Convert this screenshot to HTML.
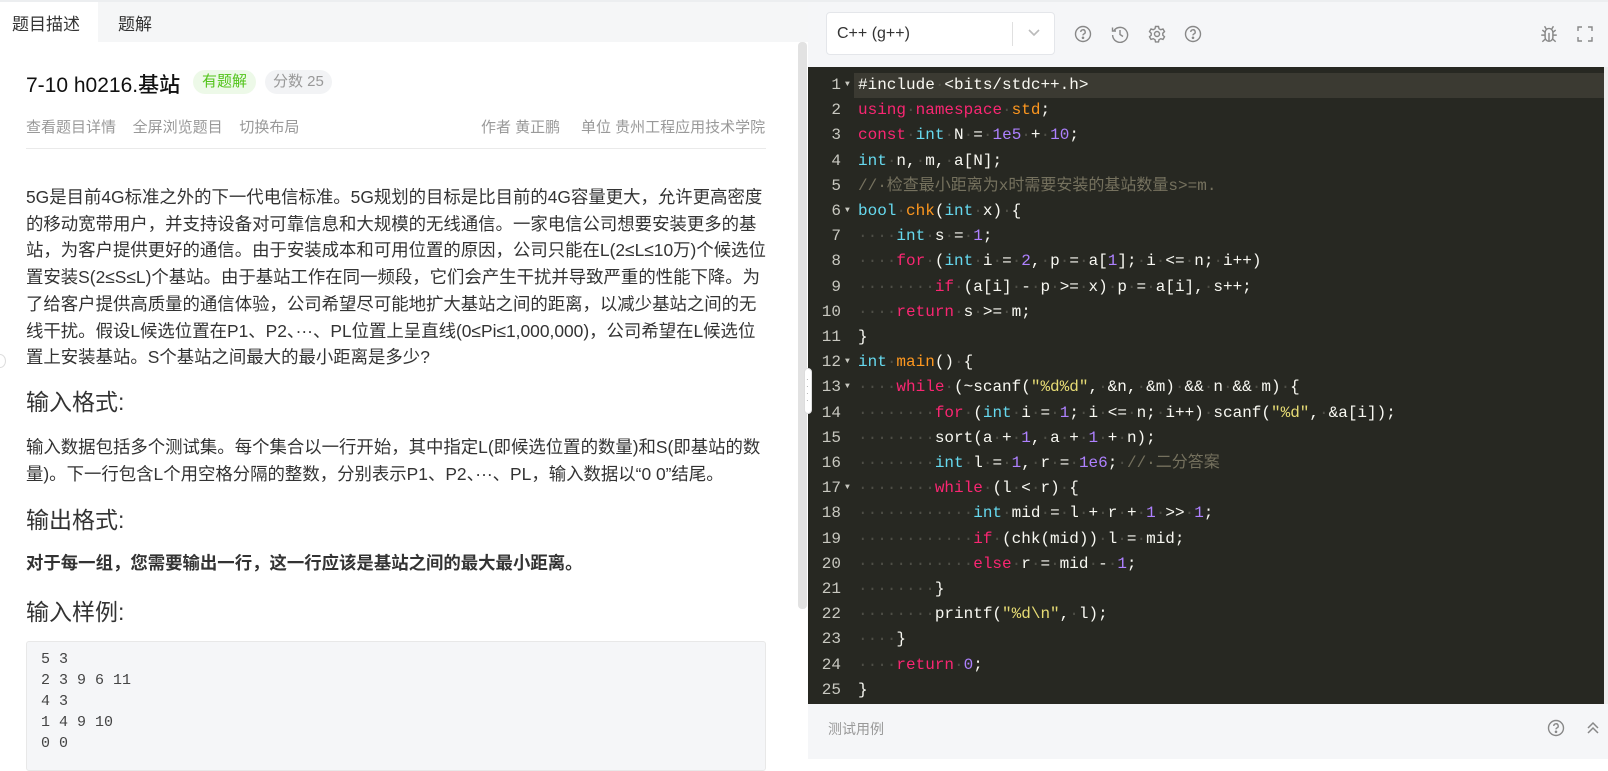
<!DOCTYPE html>
<html><head><meta charset="utf-8"><style>
*{margin:0;padding:0;box-sizing:border-box}
body{width:1608px;height:759px;overflow:hidden;background:#fff;font-family:"Liberation Sans","Noto Sans CJK SC",sans-serif;position:relative;color:#333}
.a{position:absolute;white-space:nowrap}
.mono{font-family:"Liberation Mono","DejaVu Sans Mono","Noto Sans CJK SC",monospace}
#code{position:absolute;left:808px;top:67px;width:796px;height:637px;background:#272822;font-size:16px;color:#f8f8f2}
.ln{position:absolute;left:0;width:33px;text-align:right;color:#c8c8c0}
.cl{position:absolute;left:50px;white-space:pre}
.row{position:absolute;left:0;right:0;height:25.2px;line-height:25.2px}
.d{color:#4e4e46}.k{color:#f92672}.t{color:#66d9ef}.n{color:#ae81ff}.s{color:#e6db74}.f{color:#fd971f}.c{color:#75715e}
.fa{position:absolute;left:37px;top:-1px;font-size:8px;color:#c8c8c0}
.ico{position:absolute}
</style></head><body>
<!-- left -->
<div class="a" style="left:0;top:0;width:808px;height:42px;background:#f5f6f7;border-top:2px solid #eceef0"></div>
<div class="a" style="left:0;top:2px;width:98px;height:40px;background:#fff"></div>
<div class="a" style="left:12px;top:10px;font-size:17px;color:#333">题目描述</div>
<div class="a" style="left:118px;top:10px;font-size:17px;color:#333">题解</div>
<div class="a" style="left:798px;top:42px;width:9px;height:567px;background:#e2e2e2;border-radius:4px"></div>

<div class="a" style="left:26px;top:69px;font-size:21px;color:#111;font-weight:500">7-10 h0216.基站</div>
<div class="a" style="left:193px;top:70px;height:24px;line-height:24px;padding:0 9px;font-size:15px;color:#52c41a;background:#edf9e8;border-radius:12px">有题解</div>
<div class="a" style="left:265px;top:70px;height:24px;line-height:24px;padding:0 8px;font-size:15px;color:#999;background:#f2f3f5;border-radius:12px">分数 25</div>
<div class="a" style="left:26px;top:116px;font-size:15px;color:#999">查看题目详情&nbsp;&nbsp;&nbsp;&nbsp;全屏浏览题目&nbsp;&nbsp;&nbsp;&nbsp;切换布局</div>
<div class="a" style="left:481px;top:116px;font-size:15px;color:#999">作者 黄正鹏&nbsp;&nbsp;&nbsp;&nbsp;&nbsp;单位 贵州工程应用技术学院</div>
<div class="a" style="left:26px;top:148px;width:740px;height:1px;background:#eaeaea"></div>

<div class="a" style="left:26px;top:184px;font-size:17.4px;line-height:26.7px;color:#333">5G是目前4G标准之外的下一代电信标准。5G规划的目标是比目前的4G容量更大，允许更高密度<br>的移动宽带用户，并支持设备对可靠信息和大规模的无线通信。一家电信公司想要安装更多的基<br>站，为客户提供更好的通信。由于安装成本和可用位置的原因，公司只能在L(2≤L≤10万)个候选位<br>置安装S(2≤S≤L)个基站。由于基站工作在同一频段，它们会产生干扰并导致严重的性能下降。为<br>了给客户提供高质量的通信体验，公司希望尽可能地扩大基站之间的距离，以减少基站之间的无<br>线干扰。假设L候选位置在P1、P2、···、PL位置上呈直线(0≤Pi≤1,000,000)，公司希望在L候选位<br>置上安装基站。S个基站之间最大的最小距离是多少?</div>
<div class="a" style="left:-6px;top:354px;width:12px;height:14px;border:1px solid #ddd;border-radius:50%;background:#fff"></div>
<div class="a" style="left:26px;top:383px;font-size:23px;color:#333">输入格式:</div>
<div class="a" style="left:26px;top:434px;font-size:17.4px;line-height:26.7px">输入数据包括多个测试集。每个集合以一行开始，其中指定L(即候选位置的数量)和S(即基站的数<br>量)。下一行包含L个用空格分隔的整数，分别表示P1、P2、···、PL，输入数据以“0 0”结尾。</div>
<div class="a" style="left:26px;top:501px;font-size:23px">输出格式:</div>
<div class="a" style="left:26px;top:550px;font-size:17.4px;font-weight:bold">对于每一组，您需要输出一行，这一行应该是基站之间的最大最小距离。</div>
<div class="a" style="left:26px;top:593px;font-size:23px">输入样例:</div>
<div class="a mono" style="left:26px;top:641px;width:740px;height:130px;background:#f5f6f8;border:1px solid #e8e8e8;border-radius:3px;padding:7px 14px;font-size:15px;line-height:21px;color:#444;white-space:pre">5 3
2 3 9 6 11
4 3
1 4 9 10
0 0</div>

<!-- right header -->
<div class="a" style="left:808px;top:0;width:800px;height:67px;background:#f5f6f8;border-top:2px solid #eceef0"></div>
<div class="a" style="left:826px;top:12px;width:229px;height:43px;background:#fff;border:1px solid #e4e6ea;border-radius:4px"></div>
<div class="a" style="left:837px;top:24px;font-size:16px;line-height:20px;color:#333">C++ (g++)</div>
<div class="a" style="left:1012px;top:22px;width:1px;height:24px;background:#e0e0e0"></div>
<svg class="ico" style="left:1026px;top:27px" width="16" height="12" viewBox="0 0 16 12"><path d="M3 3l5 5 5-5" stroke="#bbb" stroke-width="1.6" fill="none"/></svg>
<svg class="ico" style="left:1074px;top:25px" width="18" height="18" viewBox="0 0 18 18" fill="none" stroke="#888" stroke-width="1.4"><circle cx="9" cy="9" r="7.5"/><path d="M6.8 7a2.2 2.2 0 1 1 3 2c-.6.3-.8.7-.8 1.4"/><circle cx="9" cy="12.8" r=".6" fill="#888"/></svg>
<svg class="ico" style="left:1111px;top:25px" width="18" height="18" viewBox="0 0 18 18" fill="none" stroke="#888" stroke-width="1.4"><path d="M3 5.5A7.5 7.5 0 1 1 1.6 10"/><path d="M1.5 2.5v3.5h3.5"/><path d="M9 5v4.5l3 2"/></svg>
<svg class="ico" style="left:1148px;top:25px" width="18" height="18" viewBox="0 0 18 18" fill="none" stroke="#888" stroke-width="1.4"><path d="M7.5 1.5h3l.5 2.2 1.8 1 2.2-.7 1.5 2.6-1.7 1.6v2l1.7 1.6-1.5 2.6-2.2-.7-1.8 1-.5 2.2h-3l-.5-2.2-1.8-1-2.2.7-1.5-2.6 1.7-1.6v-2L1.5 6.6 3 4l2.2.7 1.8-1z"/><circle cx="9" cy="9" r="2.5"/></svg>
<svg class="ico" style="left:1184px;top:25px" width="18" height="18" viewBox="0 0 18 18" fill="none" stroke="#888" stroke-width="1.4"><circle cx="9" cy="9" r="7.5"/><path d="M6.8 7a2.2 2.2 0 1 1 3 2c-.6.3-.8.7-.8 1.4"/><circle cx="9" cy="12.8" r=".6" fill="#888"/></svg>
<svg class="ico" style="left:1539px;top:24px" width="20" height="20" viewBox="0 0 18 18" fill="none" stroke="#888" stroke-width="1.3"><path d="M5.5 7.5a3.5 3.5 0 0 1 7 0v4.5a3.5 3.5 0 0 1-7 0z"/><path d="M9 8v7.5M5.5 10H2M12.5 10H16M5.5 7.5L3 5.5M12.5 7.5L15 5.5M5.7 13.5L3 16M12.3 13.5L15 16M6.5 4.5L5 2M11.5 4.5L13 2"/></svg>
<svg class="ico" style="left:1577px;top:26px" width="16" height="16" viewBox="0 0 16 16" fill="none" stroke="#888" stroke-width="1.4"><path d="M1 5V1h4M11 1h4v4M15 11v4h-4M5 15H1v-4"/></svg>
<div class="a" style="left:1604px;top:67px;width:4px;height:637px;background:#ececec"></div>

<!-- code -->
<div id="code" class="mono">
<div class="row" style="top:6px;left:46px;background:#3b3a32"></div>
<div style="position:absolute;top:6px;left:0;right:0">
<div class="row" style="top:0"><span class="ln">1</span><span class="fa">▼</span><span class="cl">#include<i class="d">·</i>&lt;bits/stdc++.h&gt;</span></div>
<div class="row" style="top:25.2px"><span class="ln">2</span><span class="cl"><span class="k">using</span><span class="d">·</span><span class="k">namespace</span><span class="d">·</span><span class="f">std</span>;</span></div>
<div class="row" style="top:50.4px"><span class="ln">3</span><span class="cl"><span class="k">const</span><span class="d">·</span><span class="t">int</span><span class="d">·</span>N<span class="d">·</span>=<span class="d">·</span><span class="n">1e5</span><span class="d">·</span>+<span class="d">·</span><span class="n">10</span>;</span></div>
<div class="row" style="top:75.6px"><span class="ln">4</span><span class="cl"><span class="t">int</span><span class="d">·</span>n,<span class="d">·</span>m,<span class="d">·</span>a[N];</span></div>
<div class="row" style="top:100.8px"><span class="ln">5</span><span class="cl c">//·检查最小距离为x时需要安装的基站数量s&gt;=m.</span></div>
<div class="row" style="top:126px"><span class="ln">6</span><span class="fa">▼</span><span class="cl"><span class="t">bool</span><span class="d">·</span><span class="f">chk</span>(<span class="t">int</span><span class="d">·</span>x)<span class="d">·</span>{</span></div>
<div class="row" style="top:151.2px"><span class="ln">7</span><span class="cl"><span class="d">····</span><span class="t">int</span><span class="d">·</span>s<span class="d">·</span>=<span class="d">·</span><span class="n">1</span>;</span></div>
<div class="row" style="top:176.4px"><span class="ln">8</span><span class="cl"><span class="d">····</span><span class="k">for</span><span class="d">·</span>(<span class="t">int</span><span class="d">·</span>i<span class="d">·</span>=<span class="d">·</span><span class="n">2</span>,<span class="d">·</span>p<span class="d">·</span>=<span class="d">·</span>a[<span class="n">1</span>];<span class="d">·</span>i<span class="d">·</span>&lt;=<span class="d">·</span>n;<span class="d">·</span>i++)</span></div>
<div class="row" style="top:201.6px"><span class="ln">9</span><span class="cl"><span class="d">········</span><span class="k">if</span><span class="d">·</span>(a[i]<span class="d">·</span>-<span class="d">·</span>p<span class="d">·</span>&gt;=<span class="d">·</span>x)<span class="d">·</span>p<span class="d">·</span>=<span class="d">·</span>a[i],<span class="d">·</span>s++;</span></div>
<div class="row" style="top:226.8px"><span class="ln">10</span><span class="cl"><span class="d">····</span><span class="k">return</span><span class="d">·</span>s<span class="d">·</span>&gt;=<span class="d">·</span>m;</span></div>
<div class="row" style="top:252px"><span class="ln">11</span><span class="cl">}</span></div>
<div class="row" style="top:277.2px"><span class="ln">12</span><span class="fa">▼</span><span class="cl"><span class="t">int</span><span class="d">·</span><span class="f">main</span>()<span class="d">·</span>{</span></div>
<div class="row" style="top:302.4px"><span class="ln">13</span><span class="fa">▼</span><span class="cl"><span class="d">····</span><span class="k">while</span><span class="d">·</span>(~scanf(<span class="s">"%d%d"</span>,<span class="d">·</span>&amp;n,<span class="d">·</span>&amp;m)<span class="d">·</span>&amp;&amp;<span class="d">·</span>n<span class="d">·</span>&amp;&amp;<span class="d">·</span>m)<span class="d">·</span>{</span></div>
<div class="row" style="top:327.6px"><span class="ln">14</span><span class="cl"><span class="d">········</span><span class="k">for</span><span class="d">·</span>(<span class="t">int</span><span class="d">·</span>i<span class="d">·</span>=<span class="d">·</span><span class="n">1</span>;<span class="d">·</span>i<span class="d">·</span>&lt;=<span class="d">·</span>n;<span class="d">·</span>i++)<span class="d">·</span>scanf(<span class="s">"%d"</span>,<span class="d">·</span>&amp;a[i]);</span></div>
<div class="row" style="top:352.8px"><span class="ln">15</span><span class="cl"><span class="d">········</span>sort(a<span class="d">·</span>+<span class="d">·</span><span class="n">1</span>,<span class="d">·</span>a<span class="d">·</span>+<span class="d">·</span><span class="n">1</span><span class="d">·</span>+<span class="d">·</span>n);</span></div>
<div class="row" style="top:378px"><span class="ln">16</span><span class="cl"><span class="d">········</span><span class="t">int</span><span class="d">·</span>l<span class="d">·</span>=<span class="d">·</span><span class="n">1</span>,<span class="d">·</span>r<span class="d">·</span>=<span class="d">·</span><span class="n">1e6</span>;<span class="d">·</span><span class="c">//·二分答案</span></span></div>
<div class="row" style="top:403.2px"><span class="ln">17</span><span class="fa">▼</span><span class="cl"><span class="d">········</span><span class="k">while</span><span class="d">·</span>(l<span class="d">·</span>&lt;<span class="d">·</span>r)<span class="d">·</span>{</span></div>
<div class="row" style="top:428.4px"><span class="ln">18</span><span class="cl"><span class="d">············</span><span class="t">int</span><span class="d">·</span>mid<span class="d">·</span>=<span class="d">·</span>l<span class="d">·</span>+<span class="d">·</span>r<span class="d">·</span>+<span class="d">·</span><span class="n">1</span><span class="d">·</span>&gt;&gt;<span class="d">·</span><span class="n">1</span>;</span></div>
<div class="row" style="top:453.6px"><span class="ln">19</span><span class="cl"><span class="d">············</span><span class="k">if</span><span class="d">·</span>(chk(mid))<span class="d">·</span>l<span class="d">·</span>=<span class="d">·</span>mid;</span></div>
<div class="row" style="top:478.8px"><span class="ln">20</span><span class="cl"><span class="d">············</span><span class="k">else</span><span class="d">·</span>r<span class="d">·</span>=<span class="d">·</span>mid<span class="d">·</span>-<span class="d">·</span><span class="n">1</span>;</span></div>
<div class="row" style="top:504px"><span class="ln">21</span><span class="cl"><span class="d">········</span>}</span></div>
<div class="row" style="top:529.2px"><span class="ln">22</span><span class="cl"><span class="d">········</span>printf(<span class="s">"%d\n"</span>,<span class="d">·</span>l);</span></div>
<div class="row" style="top:554.4px"><span class="ln">23</span><span class="cl"><span class="d">····</span>}</span></div>
<div class="row" style="top:579.6px"><span class="ln">24</span><span class="cl"><span class="d">····</span><span class="k">return</span><span class="d">·</span><span class="n">0</span>;</span></div>
<div class="row" style="top:604.8px"><span class="ln">25</span><span class="cl">}</span></div>
</div>
</div>
<div class="a" style="left:804px;top:368px;width:8px;height:46px;background:#fff;border:1px solid #ddd;border-radius:4px"></div>
<div class="a" style="left:806px;top:376px;font-size:8px;line-height:7px;color:#999;width:4px">·<br>·<br>·<br>·</div>

<!-- bottom bar -->
<div class="a" style="left:808px;top:704px;width:800px;height:55px;background:#f5f6f8"></div>
<div class="a" style="left:828px;top:719px;font-size:14px;color:#999">测试用例</div>
<svg class="ico" style="left:1547px;top:719px" width="18" height="18" viewBox="0 0 18 18" fill="none" stroke="#888" stroke-width="1.4"><circle cx="9" cy="9" r="7.5"/><path d="M6.8 7a2.2 2.2 0 1 1 3 2c-.6.3-.8.7-.8 1.4"/><circle cx="9" cy="12.8" r=".6" fill="#888"/></svg>
<svg class="ico" style="left:1586px;top:720px" width="14" height="16" viewBox="0 0 14 16" fill="none" stroke="#888" stroke-width="1.5"><path d="M2 8l5-5 5 5M2 13l5-5 5 5"/></svg>
</body></html>
